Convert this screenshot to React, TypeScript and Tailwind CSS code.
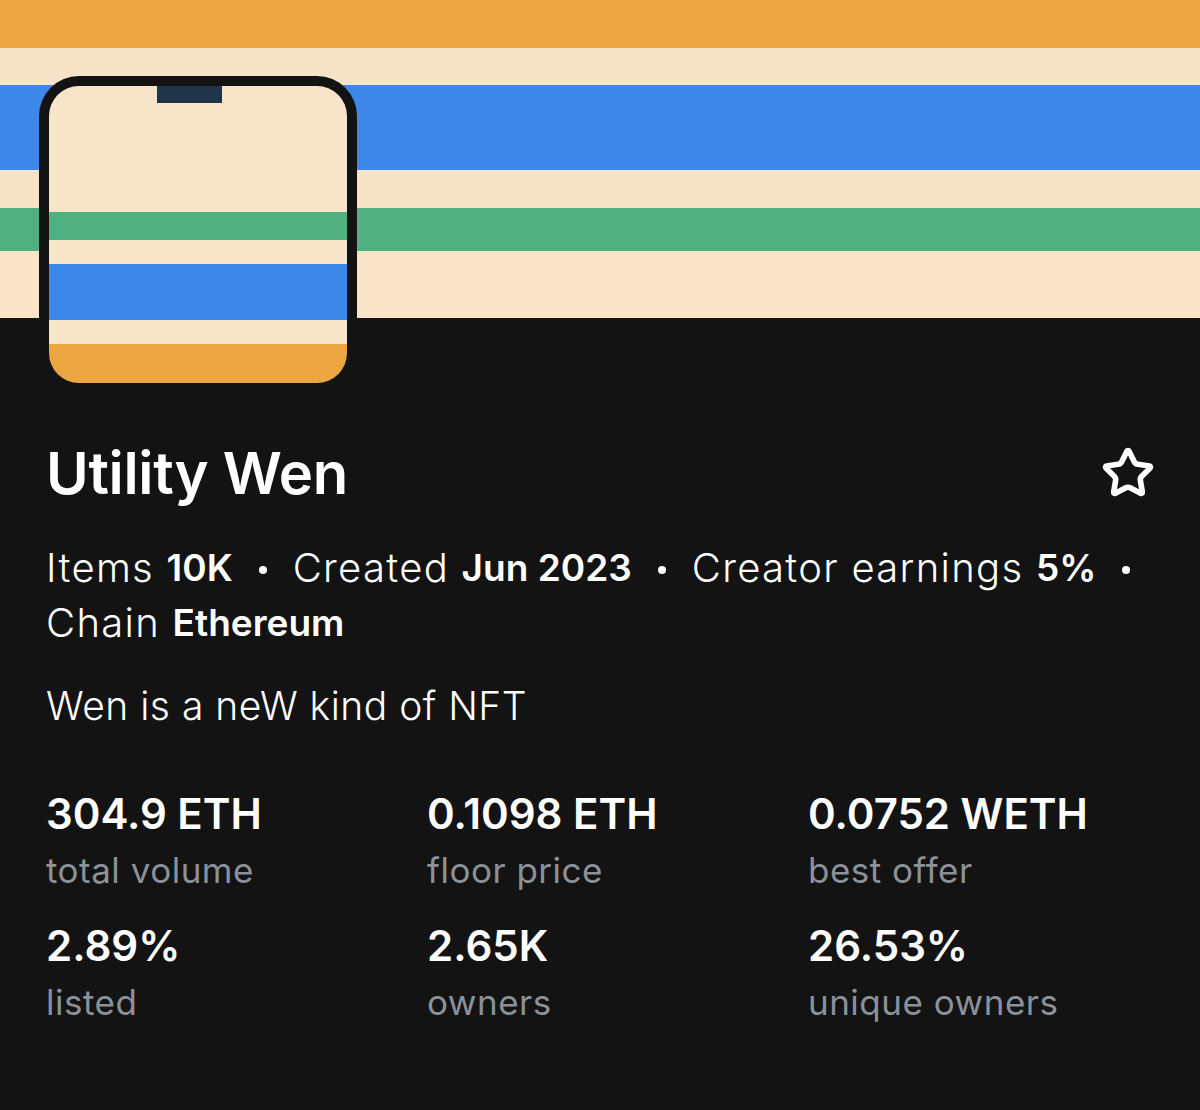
import { Star } from "lucide-react";

const stats = [
  { value: "304.9 ETH", label: "total volume" },
  { value: "0.1098 ETH", label: "floor price" },
  { value: "0.0752 WETH", label: "best offer" },
  { value: "2.89%", label: "listed" },
  { value: "2.65K", label: "owners" },
  { value: "26.53%", label: "unique owners" },
];

// meta rows, split where the phone wraps them
const metaLines = [
  [
    { label: "Items", value: "10K" },
    { label: "Created", value: "Jun 2023" },
    { label: "Creator earnings", value: "5%" },
  ],
  [{ label: "Chain", value: "Ethereum" }],
];

function Banner() {
  return (
    <div className="flex h-[318px] flex-col">
      <div className="h-[48px] bg-[#eca641]" />
      <div className="h-[37px] bg-[#f7e3c7]" />
      <div className="h-[85px] bg-[#3d88e8]" />
      <div className="h-[38px] bg-[#f7e3c7]" />
      <div className="h-[43px] bg-[#52b183]" />
      <div className="flex-1 bg-[#f9e4c8]" />
    </div>
  );
}

function Avatar() {
  return (
    <div className="relative ml-[39px] mt-[-242px] h-[317px] w-[318px] rounded-[40px] bg-[#131313] p-[10px]">
      <div className="flex h-full flex-col overflow-hidden rounded-[30px]">
        {/* top cream with little dark tab */}
        <div className="flex h-[126px] justify-center bg-[#f8e4c8]">
          <div className="ml-[-18px] h-[17px] w-[65px] bg-[#20354a]" />
        </div>
        <div className="h-[28px] bg-[#52b183]" />
        <div className="h-[24px] bg-[#f8e4c8]" />
        <div className="h-[56px] bg-[#3d88e8]" />
        <div className="h-[24px] bg-[#f8e4c8]" />
        <div className="flex-1 bg-[#eca641]" />
      </div>
    </div>
  );
}

function Dot() {
  return <span className="mx-[26px] mt-[4px] h-[8px] w-[8px] shrink-0 rounded-full bg-white" />;
}

export default function App() {
  return (
    <div className="h-[1110px] w-[1200px] overflow-hidden bg-[#131313] font-['Inter',sans-serif] text-white">
      <Banner />
      <Avatar />

      <div className="px-[46px]">
        <div className="mt-[50px] flex items-center justify-between">
          <h1 className="text-[58px] font-semibold leading-[60px] tracking-[-0.3px]">Utility Wen</h1>
          <Star className="mr-[-1px] h-[54px] w-[54px] text-white" strokeWidth={2.5} />
        </div>

        <div className="mt-[37px]">
          {metaLines.map((line, li) => (
            <div key={li} className="flex h-[55px] items-center whitespace-nowrap">
              {line.map((m, i) => (
                <div key={m.label} className="flex items-center">
                  <span className="text-[40px] font-light leading-[55px] tracking-[1.3px]">{m.label}&nbsp;</span>
                  <span className="text-[37px] font-semibold leading-[55px]">{m.value}</span>
                  {(li === 0 || i < line.length - 1) && <Dot />}
                </div>
              ))}
            </div>
          ))}
        </div>

        <p className="mt-[28px] text-[39px] font-light leading-[55px] tracking-[0.5px]">Wen is a neW kind of NFT</p>

        <div className="mt-[53px] grid grid-cols-[381px_381px_381px] gap-y-[20px]">
          {stats.map((s) => (
            <div key={s.label}>
              <div className="text-[42px] font-semibold leading-[56px]">{s.value}</div>
              <div className="text-[35px] leading-[56px] tracking-[0.5px] text-[#8b9199]">{s.label}</div>
            </div>
          ))}
        </div>
      </div>
    </div>
  );
}
